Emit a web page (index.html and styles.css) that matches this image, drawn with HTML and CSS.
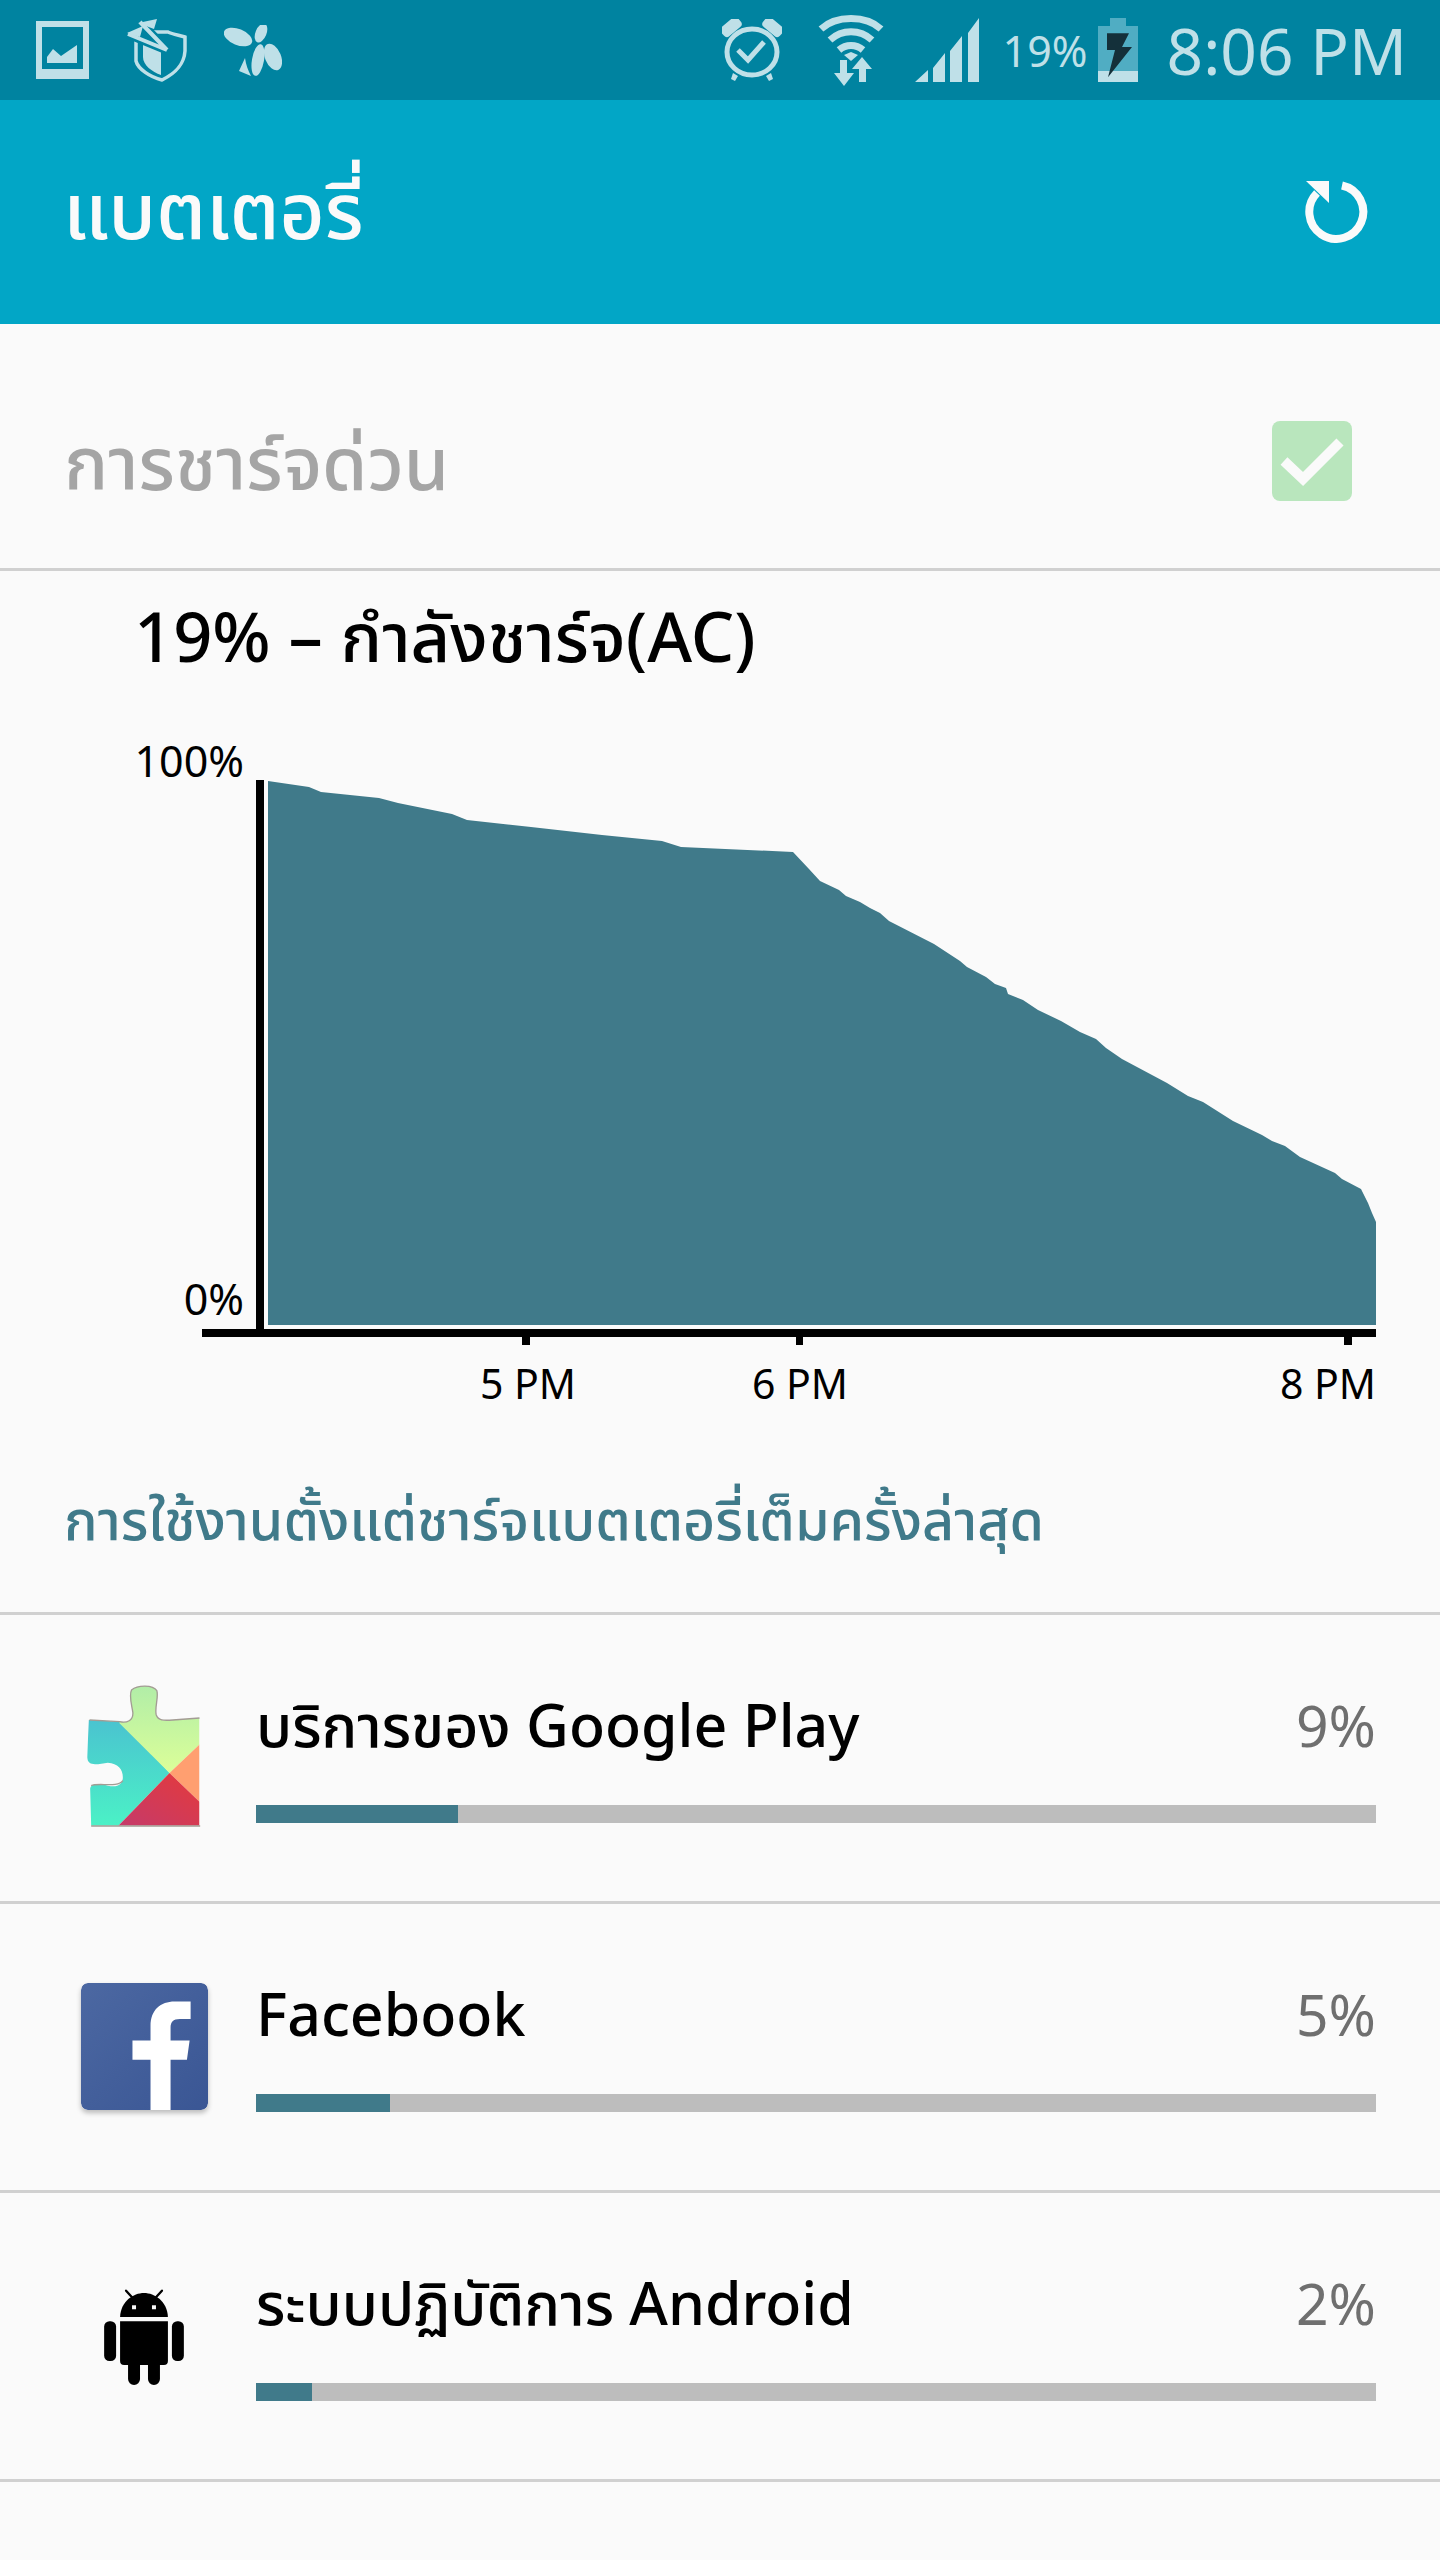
FILE: index.html
```html
<!DOCTYPE html>
<html lang="th">
<head>
    <meta charset="UTF-8">
    <meta name="viewport" content="width=device-width, initial-scale=1.0">
    <title>แบตเตอรี่</title>
    <link rel="stylesheet" href="styles.css">
</head>
<body>
    <!-- Status bar -->
    <div class="status">
        <div class="status-group left">
            <svg class="ic-image" viewBox="0 0 53 58"><path fill="#bfe0e8" fill-rule="evenodd" d="M0 0H53V58H0ZM6 6V48H47V6Z"/><path fill="#bfe0e8" d="M11 42V36L17 28L25 35L41 24V42Z"/></svg>
            <svg class="ic-shield" viewBox="0 0 61 63"><path fill="none" stroke="#bfe0e8" stroke-width="3.500" d="M10 21V42C12 50 24 58 36 61C48 55 58 47 59 32V18C52 16 46 15 42 13H24"/><path fill="#bfe0e8" d="M17 23H35V56C26 53 17 46 17 38Z"/><path fill="none" stroke="#0083a0" stroke-width="9" d="M14 3L41 31M2 15L41 31"/><path fill="none" stroke="#bfe0e8" stroke-width="4" d="M14 3L41 31M2 15L41 31"/><path fill="#bfe0e8" d="M12 4L31 0L28 10ZM1 14L17 7L14 18Z"/></svg>
            <svg class="ic-bee" viewBox="0 0 58 51"><g fill="#bfe0e8"><ellipse cx="14" cy="12" rx="15" ry="8" transform="rotate(22 14 12)"/><ellipse cx="37" cy="8" rx="5.500" ry="10" transform="rotate(22 37 8)"/><ellipse cx="49" cy="32" rx="8" ry="14" transform="rotate(-22 49 32)"/><ellipse cx="34" cy="35" rx="6" ry="16" transform="rotate(10 34 35)"/><path d="M21 33L15 46L27 51C24 45 22 40 21 33Z"/></g></svg>
        </div>
        <div class="status-group right">
            <svg class="ic-alarm" viewBox="0 0 60 62"><g fill="#bfe0e8"><rect x="-2" y="2" width="22" height="12" rx="4" transform="rotate(-40 9 8)"/><rect x="40" y="2" width="22" height="12" rx="4" transform="rotate(40 51 8)"/><path d="M11 54L16 57L13 62L9 60ZM49 54L44 57L47 62L51 60Z"/></g><ellipse cx="30" cy="33" rx="25" ry="23" fill="none" stroke="#bfe0e8" stroke-width="5"/><path d="M16 31L26 41L42 23" fill="none" stroke="#bfe0e8" stroke-width="5"/></svg>
            <svg class="ic-wifi" viewBox="0 0 66 71"><g fill="none" stroke="#bfe0e8" stroke-width="7"><path d="M3 14C18 0 48 0 63 14"/><path d="M12 25C24 14 42 14 54 25"/><path d="M21 35C28 29 38 29 45 35"/></g><g fill="#bfe0e8"><path d="M26 40L33 37L40 40L33 46Z"/><path d="M22 45H29V58H36L26 71L16 58H22Z"/><path d="M41 67H48V54H54L44 42L34 54H41Z"/></g></svg>
            <svg class="ic-signal" viewBox="0 0 64 64"><path fill="#bfe0e8" d="M0 64L13 52V64ZM18 50L30 35V64H18ZM35 33L47 18V64H35ZM53 15L64 0V64H53Z"/></svg>
            <span class="pct">19%</span>
            <svg class="ic-battery" viewBox="0 0 40 64"><path fill="#50adc3" d="M12 0H28V8H40V53H0V8H12Z"/><path fill="#bfe0e8" d="M0 53H40V64H0Z"/><path fill="#14303a" d="M9 24H31L24 42H34L10 82L17 46H9Z" transform="translate(0 -3) scale(1 .76)"/></svg>
            <span class="clock">8:06 PM</span>
        </div>
    </div>

    <!-- App bar -->
    <div class="appbar">
        <h1>แบตเตอรี่</h1>
        <svg class="ic-refresh" viewBox="0 0 64 62"><path d="M38 4.500A27 27 0 1 1 13 12" fill="none" stroke="#fafafa" stroke-width="8"/><path fill="#fafafa" d="M2 0H25V22Z"/></svg>
    </div>

    <div class="toggle-row">
        <span class="toggle-label">การชาร์จด่วน</span>
        <div class="checkbox">
            <svg viewBox="0 0 80 80"><path d="M12 40L31 58L68 21" fill="none" stroke="#fafafa" stroke-width="10"/></svg>
        </div>
    </div>

    <!-- Battery graph -->
    <div class="graph-section">
        <div class="graph-title">19% – กำลังชาร์จ(AC)</div>
        <div class="graph">
            <div class="y-labels">
                <span>100%</span>
                <span>0%</span>
            </div>
            <svg class="plot" viewBox="202 780 1174 565">
                <path fill="#000" d="M256 780H264V1329H256ZM202 1329H1376V1337H202ZM522 1337H530V1345H522ZM796 1337H803V1345H796ZM1344 1337H1352V1345H1344Z"/>
                <path fill="#407a8a" d="M268 781L309 787L321 792L379 798L398 803L452 814L467 820L531 827L602 835L662 841L681 847L793 852L809 869L820 881L839 890L846 896L860 902L870 908L880 913L889 921L934 944L960 961L967 967L986 977L995 984L1006 988L1008 994L1023 1000L1038 1010L1061 1021L1080 1032L1096 1039L1106 1048L1122 1059L1167 1083L1188 1096L1203 1102L1233 1121L1262 1135L1272 1141L1285 1146L1300 1157L1335 1173L1342 1179L1361 1189L1368 1203L1372 1213L1376 1222V1325H268Z"/>
            </svg>
            <span class="tick tick-5">5 PM</span>
            <span class="tick tick-6">6 PM</span>
            <span class="tick tick-8">8 PM</span>
        </div>
        <div class="section-title">การใช้งานตั้งแต่ชาร์จแบตเตอรี่เต็มครั้งล่าสุด</div>
    </div>

    <!-- App usage -->
    <div class="app-row">
        <div class="app-icon">
            <svg class="ic-play" viewBox="140 130 350 435">
                <defs>
                    <clipPath id="puzzle"><path d="M148 238L240 243C262 248 282 240 280 215C276 190 268 165 276 148C295 132 340 132 352 150C358 170 345 200 350 222C356 240 372 240 400 238L480 232V555L155 555L152 445C152 430 175 425 205 435C235 442 250 430 250 410C250 385 235 368 205 366C180 368 145 382 143 350Z"/></clipPath>
                    <linearGradient id="g-teal" x1="0" y1="0" x2="0" y2="1"><stop offset="0" stop-color="#4ac2d0"/><stop offset="1" stop-color="#4bf2c6"/></linearGradient>
                    <linearGradient id="g-green" x1="0" y1="0" x2="0" y2="1"><stop offset="0" stop-color="#b0eda8"/><stop offset="1" stop-color="#dcff98"/></linearGradient>
                    <linearGradient id="g-red" x1="0" y1="1" x2="1" y2="0"><stop offset="0" stop-color="#c43a6c"/><stop offset="1" stop-color="#e53a3a"/></linearGradient>
                </defs>
                <g clip-path="url(#puzzle)">
                    <path fill="url(#g-teal)" d="M140 230L240 230L390 397L232 560H140Z"/>
                    <path fill="url(#g-green)" d="M240 248L240 130H490V302L390 397Z"/>
                    <path fill="#ff9f70" d="M490 302V493L390 397Z"/>
                    <path fill="url(#g-red)" d="M390 397L490 493V560H232Z"/>
                </g>
                <path fill="none" stroke="#a39c94" stroke-width="4" d="M150 238L240 243C262 248 282 240 280 215C276 190 268 165 276 148C295 132 340 132 352 150C358 170 345 200 350 222C356 240 372 240 400 238L480 232M155 435C175 425 235 442 250 420M155 556H482"/>
            </svg>
        </div>
        <div class="app-body">
            <div class="app-head"><span class="app-name">บริการของ Google Play</span><span class="app-pct">9%</span></div>
            <div class="bar"><div class="bar-fill" style="width: 18%"></div></div>
        </div>
    </div>
    <div class="app-row">
        <div class="app-icon">
            <svg class="ic-fb" viewBox="0 0 380 380">
                <defs><linearGradient id="g-fb" x1="0" y1="0" x2="1" y2="1"><stop offset="0" stop-color="#4c68a2"/><stop offset="1" stop-color="#3a5694"/></linearGradient></defs>
                <rect width="380" height="380" rx="20" fill="url(#g-fb)"/>
                <path fill="#fff" d="M208 380V230H154V172H208V128C208 80 238 55 280 55H328V108H296C275 108 268 118 268 134V172H325L317 230H268V380Z"/>
            </svg>
        </div>
        <div class="app-body">
            <div class="app-head"><span class="app-name">Facebook</span><span class="app-pct">5%</span></div>
            <div class="bar"><div class="bar-fill" style="width: 12%"></div></div>
        </div>
    </div>
    <div class="app-row">
        <div class="app-icon">
            <svg class="ic-android" viewBox="192 1010 240 295">
                <path d="M240 1097C242 1050 280 1025 312 1025C344 1025 382 1050 384 1097Z"/>
                <path d="M258 1018L278 1040M366 1018L346 1040" stroke="#000" stroke-width="7" stroke-linecap="round"/>
                <rect x="276" y="1062" width="12" height="12" fill="#fafafa"/>
                <rect x="336" y="1062" width="12" height="12" fill="#fafafa"/>
                <path d="M240 1110H384V1230Q384 1242 372 1242H360V1284A18 18 0 0 1 324 1284V1242H300V1284A18 18 0 0 1 264 1284V1242H252Q240 1242 240 1230Z"/>
                <rect x="192" y="1110" width="36" height="120" rx="16"/>
                <rect x="396" y="1110" width="36" height="120" rx="16"/>
            </svg>
        </div>
        <div class="app-body">
            <div class="app-head"><span class="app-name">ระบบปฏิบัติการ Android</span><span class="app-pct">2%</span></div>
            <div class="bar"><div class="bar-fill" style="width: 5%"></div></div>
        </div>
    </div>
</body>
</html>
```

FILE: styles.css
```css
/* General Styles */
* {
    box-sizing: border-box;
}

body {
    margin: 0;
    height: 2560px;
    overflow: hidden;
    background-color: #fafafa;
    color: #000000;
    font-family: "Noto Sans", "Noto Sans Thai", "Lato", "DejaVu Sans", sans-serif;
}

/* Status bar */
.status {
    height: 100px;
    padding: 0 33px 0 36px;
    display: flex;
    justify-content: space-between;
    align-items: center;
    background-color: #0083a0;
    color: #bfe0e8;
}

.status-group {
    display: flex;
    align-items: center;
}

.status-group svg {
    display: block;
    flex: none;
}

.status-group.left {
    gap: 37px;
}

.ic-image { width: 53px; height: 58px; }
.ic-shield { width: 61px; height: 63px; }
.ic-bee { width: 58px; height: 51px; }
.ic-alarm { width: 60px; height: 62px; margin-right: 36px; }
.ic-wifi { width: 66px; height: 71px; margin-right: 31px; }
.ic-signal { width: 64px; height: 64px; margin-right: 24px; }
.ic-battery { width: 40px; height: 64px; margin: 0 29px 0 12px; }

.pct {
    font-size: 43px;
    width: 83px;
    white-space: nowrap;
}

.clock {
    font-size: 64px;
    white-space: nowrap;
}

/* App bar */
.appbar {
    height: 224px;
    padding: 0 72px 0 63px;
    display: flex;
    justify-content: space-between;
    align-items: center;
    background-color: #02a6c6;
    color: #fafafa;
}

.appbar h1 {
    margin: 0;
    padding-top: 6px;
    font-size: 78px;
    font-weight: 500;
}

.ic-refresh {
    width: 64px;
    height: 62px;
}

/* Fast charge row */
.toggle-row {
    height: 247px;
    padding: 30px 88px 0 64px;
    display: flex;
    justify-content: space-between;
    align-items: center;
    border-bottom: 3px solid #d0d0d0;
    color: #a5a5a5;
    font-size: 73px;
    font-weight: 500;
}

.toggle-label {
    padding-top: 12px;
}

.checkbox {
    width: 80px;
    height: 80px;
    border-radius: 8px;
    background-color: #b9e6bd;
}

.checkbox svg {
    display: block;
}

/* Battery graph */
.graph-section {
    height: 1044px;
    border-bottom: 3px solid #d0d0d0;
}

.graph-title {
    height: 209px;
    padding: 24px 0 0 134px;
    font-size: 68.500px;
    font-weight: 500;
    line-height: 82px;
    white-space: nowrap;
}

.graph {
    position: relative;
    height: 704px;
    margin-left: 202px;
}

.plot {
    display: block;
    width: 1174px;
    height: 565px;
}

.y-labels span {
    position: absolute;
    right: 1196px;
    font-size: 43px;
    line-height: 50px;
}

.y-labels span:first-child {
    top: -44px;
}

.y-labels span:last-child {
    top: 494px;
}

.tick {
    position: absolute;
    top: 575px;
    font-size: 41px;
    line-height: 56px;
    white-space: nowrap;
    transform: translateX(-50%);
}

.tick-5 { left: 326px; }
.tick-6 { left: 598px; }
.tick-8 { left: 1126px; }

.section-title {
    padding-left: 64px;
    color: #407a8a;
    font-size: 55.500px;
    font-weight: 500;
    line-height: 70px;
    white-space: nowrap;
}

/* App usage rows */
.app-row {
    height: 289px;
    padding: 0 64px;
    display: flex;
    gap: 32px;
    border-bottom: 3px solid #d0d0d0;
}

.app-icon {
    width: 160px;
    padding-top: 69px;
    display: flex;
    justify-content: center;
}

.ic-play { width: 117px; height: 145px; }
.ic-fb { width: 127px; height: 127px; border-radius: 7px; box-shadow: 0 3px 5px rgba(0, 0, 0, 0.25); margin-top: 10px; }
.ic-android { width: 80px; height: 98px; margin-top: 26px; }

.app-body {
    flex: 1;
    padding-top: 69px;
}

.app-head {
    height: 121px;
    display: flex;
    justify-content: space-between;
    align-items: baseline;
    font-size: 59px;
    line-height: 80px;
}

.app-name {
    font-weight: 500;
}

.app-pct {
    color: #6f6f6f;
    font-size: 57px;
}

.bar {
    height: 18px;
    background-color: #bdbdbd;
}

.bar-fill {
    height: 100%;
    background-color: #407a8a;
}
```
